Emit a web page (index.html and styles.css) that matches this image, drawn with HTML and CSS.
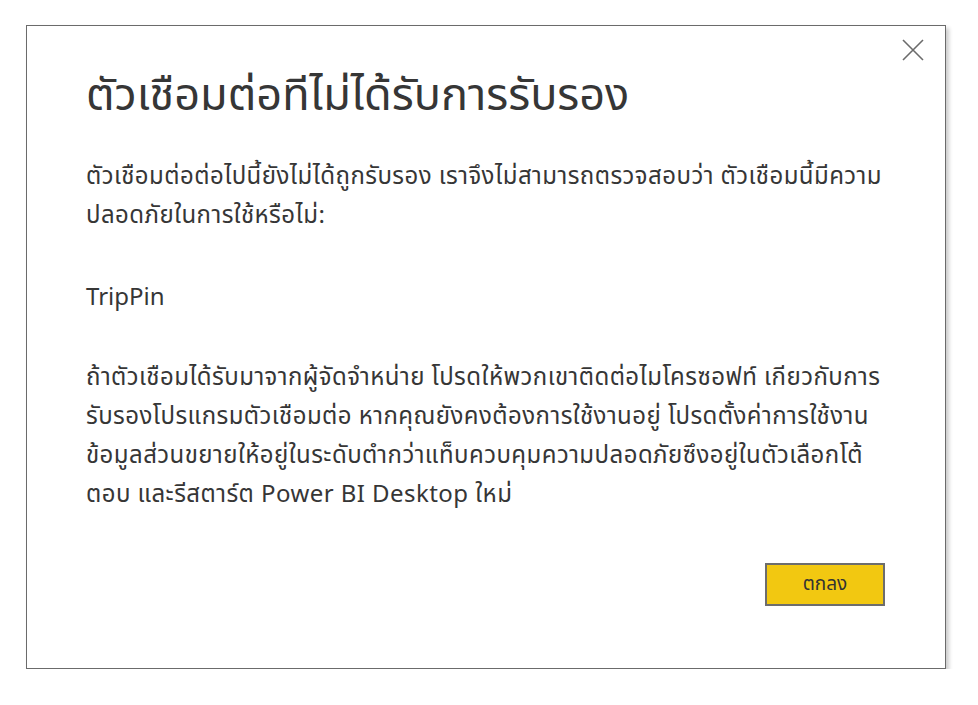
FILE: index.html
```html
<!DOCTYPE html>
<html lang="th">
<head>
<meta charset="utf-8">
<link rel="stylesheet" href="styles.css">
</head>
<body>
<div class="dialog">
  <button class="close" aria-label="ปิด">
    <svg width="22" height="22" viewBox="0 0 22 22"><path d="M1 1 L21 21 M21 1 L1 21" stroke="#6b6b6b" stroke-width="1.6" fill="none"/></svg>
  </button>
  <h1 class="title">ตัวเชือมต่อทีไม่ได้รับการรับรอง</h1>
  <p class="text">ตัวเชือมต่อต่อไปนี้ยังไม่ได้ถูกรับรอง เราจึงไม่สามารถตรวจสอบว่า ตัวเชือมนี้มีความ<br>ปลอดภัยในการใช้หรือไม่:</p>
  <p class="text name">TripPin</p>
  <p class="text para">ถ้าตัวเชือมได้รับมาจากผู้จัดจำหน่าย โปรดให้พวกเขาติดต่อไมโครซอฟท์ เกียวกับการ<br>รับรองโปรแกรมตัวเชือมต่อ หากคุณยังคงต้องการใช้งานอยู่ โปรดตั้งค่าการใช้งาน<br>ข้อมูลส่วนขยายให้อยู่ในระดับตำกว่าแท็บควบคุมความปลอดภัยซึงอยู่ในตัวเลือกโต้<br>ตอบ และรีสตาร์ต Power BI Desktop ใหม่</p>
  <div class="actions">
    <button class="ok">ตกลง</button>
  </div>
</div>
</body>
</html>
```
FILE: styles.css
```css
html, body {
  margin: 0;
  padding: 0;
  background: #ffffff;
}
body {
  font-family: "Noto Sans", "Noto Sans Thai", "DejaVu Sans", sans-serif;
  color: #363636;
  padding: 25px 0 0 26px;
}
.dialog {
  position: relative;
  box-sizing: border-box;
  width: 920px;
  height: 644px;
  border: 1px solid #6b6b6b;
  background: #fff;
  box-shadow: 3px 3px 4px rgba(0,0,0,0.2);
  padding: 39px 59px 0 59px;
}
.close {
  position: absolute;
  top: 13px;
  right: 21px;
  background: none;
  border: 0;
  padding: 0;
  width: 22px;
  height: 22px;
}
.close svg {
  display: block;
}
.title {
  margin: 0;
  font-size: 45px;
  font-weight: normal;
  line-height: 56px;
  white-space: nowrap;
}
.text {
  margin: 34px 0 0 0;
  font-size: 24px;
  line-height: 39px;
  letter-spacing: 0.45px;
  white-space: nowrap;
}
.name {
  margin-top: 43px;
  letter-spacing: 0;
}
.para {
  margin-top: 41px;
}
.actions {
  display: flex;
  justify-content: flex-end;
  margin-top: 51px;
  padding-right: 1px;
}
.ok {
  width: 120px;
  height: 43px;
  background: #f2c811;
  border: 2px solid #6d6d6d;
  font-family: inherit;
  font-size: 19px;
  color: #333;
  padding: 0;
}
```
